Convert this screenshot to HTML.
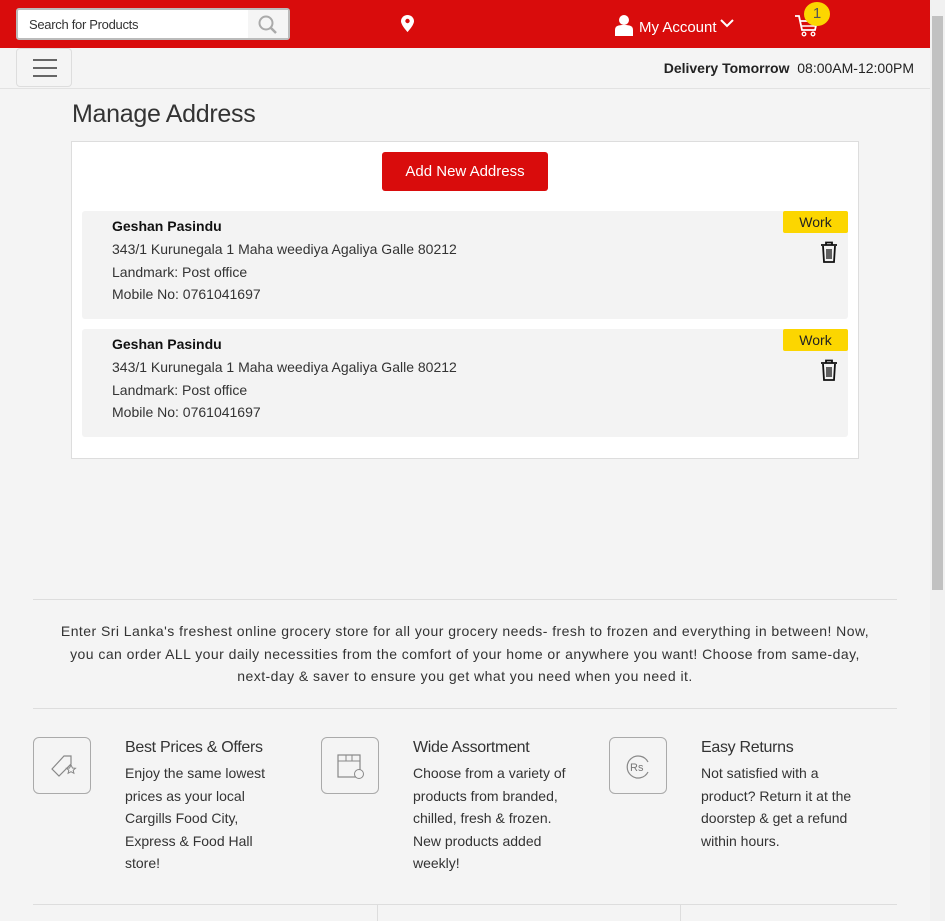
<!DOCTYPE html>
<html><head><meta charset="utf-8"><style>
*{box-sizing:border-box;margin:0;padding:0}
body{width:945px;height:921px;overflow:hidden;background:#f4f4f4;font-family:"Liberation Sans",sans-serif;color:#333;position:relative}
.hdr{position:absolute;left:0;top:0;width:930px;height:48px;background:#d90c0c}
.search{position:absolute;left:16px;top:8px;width:274px;height:32px;background:#fff;border:2px solid #bbb;border-radius:3px}
.search span{position:absolute;left:11px;top:7px;font-size:13px;color:#333;letter-spacing:-0.3px}
.search .btn{position:absolute;right:0;top:0;width:40px;height:28px;background:#f5f5f5}
.sub{position:absolute;left:0;top:48px;width:930px;height:41px;border-bottom:1px solid #e2e2e2}
.burger{position:absolute;left:16px;top:0;width:56px;height:39px;border:1px solid #ddd;border-radius:4px;background:#f4f4f4}
.burger i{position:absolute;left:16px;width:24px;height:2px;background:#666}
.deliv{position:absolute;right:16px;top:12px;font-size:14px;color:#222}
h1{position:absolute;left:72px;top:100px;font-size:25px;font-weight:normal;color:#333;letter-spacing:-0.3px}
.box{position:absolute;left:71px;top:141px;width:788px;height:318px;background:#fff;border:1px solid #ddd}
.add{position:absolute;left:310px;top:10px;width:166px;height:39px;background:#d90c0c;color:#fff;border-radius:3px;font-size:15px;text-align:center;line-height:39px}
.card{position:absolute;left:10px;width:766px;height:108px;background:#f3f3f3;border-radius:3px}
.card .t{position:absolute;left:30px;font-size:14px;color:#333}
.work{position:absolute;right:0;top:0;width:65px;height:22px;background:#fcd600;font-size:14px;text-align:center;line-height:22px;color:#222;border-radius:2px}
.trash{position:absolute;right:10px;top:30px}
.hr{position:absolute;left:33px;width:864px;height:1px;background:#ddd}
.about{position:absolute;left:33px;top:620px;width:864px;text-align:center;font-size:14px;line-height:22.5px;color:#333;letter-spacing:0.45px;white-space:nowrap}
.feat{position:absolute;top:737px}
.ic{position:absolute;left:0;top:0;width:58px;height:57px;border:1px solid #aaa;border-radius:6px}
.ft{position:absolute;left:92px;top:2px;font-size:16px;color:#333;white-space:nowrap;letter-spacing:-0.3px}
.fd{position:absolute;left:92px;top:25px;width:165px;font-size:14px;line-height:22.5px;color:#333}
.sb{position:absolute;left:930px;top:0;width:15px;height:921px;background:#f1f1f1}
.sb i{position:absolute;left:2px;top:16px;width:11px;height:574px;background:#c1c1c1}
</style></head><body>
<div class="hdr">
 <div class="search"><span>Search for Products</span><div class="btn"><svg width="40" height="28"><circle cx="18" cy="13" r="6.5" fill="none" stroke="#aaa" stroke-width="2"/><line x1="23" y1="18" x2="28" y2="23" stroke="#aaa" stroke-width="2.5"/></svg></div></div>
 <svg style="position:absolute;left:401px;top:15px" width="13" height="17"><path d="M6.5 0C3 0 0 2.7 0 6.2 0 10 6.5 17 6.5 17S13 10 13 6.2C13 2.7 10 0 6.5 0z" fill="#fff"/><circle cx="6.5" cy="6" r="2.2" fill="#d90c0c"/></svg>
 <svg style="position:absolute;left:615px;top:14px" width="18" height="22"><circle cx="9" cy="6" r="5" fill="#fff"/><path d="M0 22V16C0 12 3 11 9 11S18 12 18 16V22Z" fill="#fff"/></svg>
 <span style="position:absolute;left:639px;top:19px;font-size:15px;color:#fff">My Account</span>
 <svg style="position:absolute;left:720px;top:19px" width="14" height="10"><path d="M1 1L7 7L13 1" fill="none" stroke="#fff" stroke-width="2"/></svg>
 <svg style="position:absolute;left:794px;top:14px" width="26" height="24"><path d="M1 2H5L8 16H21L23 7H6" fill="none" stroke="#fff" stroke-width="1.8"/><path d="M8 12H22" stroke="#fff" stroke-width="1.5"/><circle cx="10" cy="20" r="1.8" fill="none" stroke="#fff" stroke-width="1.3"/><circle cx="19" cy="20" r="1.8" fill="none" stroke="#fff" stroke-width="1.3"/></svg>
 <div style="position:absolute;left:804px;top:2px;width:26px;height:24px;border-radius:50%;background:#fcd600;color:#555;font-size:15px;text-align:center;line-height:24px">1</div>
</div>
<div class="sub">
 <div class="burger"><i style="top:10px"></i><i style="top:18px"></i><i style="top:26px"></i></div>
 <div class="deliv"><b>Delivery Tomorrow</b>&nbsp; 08:00AM-12:00PM</div>
</div>
<h1>Manage Address</h1>
<div class="box">
 <div class="add">Add New Address</div>
 <div class="card" style="top:69px">
  <div class="t" style="top:7px;font-weight:bold;color:#111">Geshan Pasindu</div>
  <div class="t" style="top:30px">343/1 Kurunegala 1 Maha weediya Agaliya Galle 80212</div>
  <div class="t" style="top:53px">Landmark: Post office</div>
  <div class="t" style="top:75px">Mobile No: 0761041697</div>
  <div class="work">Work</div>
  <svg class="trash" width="18" height="22"><path d="M1 4H17M6 4V1.5H12V4" fill="none" stroke="#111" stroke-width="1.8"/><path d="M3 5L4 21H14L15 5" fill="none" stroke="#111" stroke-width="1.8"/><path d="M7 8V18M9 8V18M11 8V18" stroke="#111" stroke-width="1.3"/></svg>
 </div>
 <div class="card" style="top:187px">
  <div class="t" style="top:7px;font-weight:bold;color:#111">Geshan Pasindu</div>
  <div class="t" style="top:30px">343/1 Kurunegala 1 Maha weediya Agaliya Galle 80212</div>
  <div class="t" style="top:53px">Landmark: Post office</div>
  <div class="t" style="top:75px">Mobile No: 0761041697</div>
  <div class="work">Work</div>
  <svg class="trash" width="18" height="22"><path d="M1 4H17M6 4V1.5H12V4" fill="none" stroke="#111" stroke-width="1.8"/><path d="M3 5L4 21H14L15 5" fill="none" stroke="#111" stroke-width="1.8"/><path d="M7 8V18M9 8V18M11 8V18" stroke="#111" stroke-width="1.3"/></svg>
 </div>
</div>
<div class="hr" style="top:599px"></div>
<div class="about">Enter Sri Lanka's freshest online grocery store for all your grocery needs- fresh to frozen and everything in between! Now,<br>you can order ALL your daily necessities from the comfort of your home or anywhere you want! Choose from same-day,<br>next-day &amp; saver to ensure you get what you need when you need it.</div>
<div class="hr" style="top:708px"></div>
<div class="feat" style="left:33px"><div class="ic"><svg width="58" height="57"><path d="M18 31L30 18H37V26L25 38Z" fill="none" stroke="#888" stroke-width="1.2"/><path d="M37 27l1.5 3 3 .3-2.3 2 .7 3-2.9-1.6-2.9 1.6.7-3-2.3-2 3-.3z" fill="none" stroke="#888"/></svg></div><div class="ft">Best Prices &amp; Offers</div><div class="fd">Enjoy the same lowest prices as your local Cargills Food City, Express &amp; Food Hall store!</div></div>
<div class="feat" style="left:321px"><div class="ic"><svg width="58" height="57"><rect x="16" y="17" width="22" height="22" fill="none" stroke="#888" stroke-width="1.2"/><path d="M16 23H38M24 17V23M30 17V23" stroke="#888"/><circle cx="37" cy="36" r="4.5" fill="#f4f4f4" stroke="#888"/></svg></div><div class="ft">Wide Assortment</div><div class="fd">Choose from a variety of products from branded, chilled, fresh &amp; frozen. New products added weekly!</div></div>
<div class="feat" style="left:609px"><div class="ic"><svg width="58" height="57"><path d="M38 24A11 11 0 1 0 38 34" fill="none" stroke="#888" stroke-width="1.2"/><text x="20" y="33" font-size="11" fill="#777" font-family="Liberation Sans">Rs</text></svg></div><div class="ft">Easy Returns</div><div class="fd">Not satisfied with a product? Return it at the doorstep &amp; get a refund within hours.</div></div>
<div class="hr" style="top:904px"></div>
<div style="position:absolute;left:377px;top:905px;width:1px;height:16px;background:#ddd"></div>
<div style="position:absolute;left:680px;top:905px;width:1px;height:16px;background:#ddd"></div>
<div class="sb"><i></i></div>
</body></html>
